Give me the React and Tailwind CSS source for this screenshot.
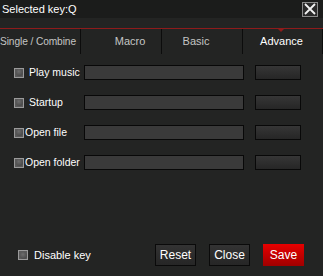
import React from "react";

const rows = [
  { label: "Play music", gap: "ml-[5px]" },
  { label: "Startup", gap: "ml-[5px]" },
  { label: "Open file", gap: "ml-[1px]" },
  { label: "Open folder", gap: "ml-[1px]" },
];

const Check = () => (
  <div className="w-[10px] h-[10px] shrink-0 border border-[#9a9a9a] bg-[#5a5a5a] flex items-center justify-center">
    <div className="w-[7px] h-[7px] rounded-full bg-[radial-gradient(circle_at_40%_35%,#6e6e6e,#3c3c3c)]" />
  </div>
);

const App = () => {
  return (
    <div
      className="w-[323px] h-[276px] bg-[#232423] text-[10.5px] text-white flex flex-col overflow-hidden"
      style={{ fontFamily: '"Liberation Sans", Arial, sans-serif' }}
    >
      {/* title bar */}
      <div className="h-[18px] bg-[#1b1c1b] flex items-center justify-between pl-[2px] pr-[5px] text-[11px]">
        <span>Selected key:Q</span>
        <div className="w-[16px] h-[15px] border border-[#8a8a8a] bg-[#2a2a2a] flex items-center justify-center">
          <svg width="12" height="12" viewBox="0 0 12 12">
            <path d="M1 1 L11 11 M11 1 L1 11" stroke="#f2f2f2" strokeWidth="1.8" />
          </svg>
        </div>
      </div>

      {/* tabs */}
      <div className="mt-[10px] h-px bg-[#8e1b1b]" />
      <div className="relative h-[25px] flex text-[#c4c4c4] text-[11px]">
        <div className="w-[81px] border-r border-[#0c0c0c] flex items-center justify-start whitespace-nowrap text-[10.2px] tracking-[-0.1px]">
          Single / Combine
        </div>
        <div className="w-[81px] border-r border-[#0c0c0c] flex items-center justify-center pl-[18px]">
          Macro
        </div>
        <div className="w-[81px] border-r border-[#0c0c0c] flex items-center justify-center pr-[12px]">
          Basic
        </div>
        <div className="w-[80px] border-r border-[#0c0c0c] flex items-center justify-center text-white pr-[2px]">
          Advance
        </div>
        <div className="absolute left-[278px] top-0 w-0 h-0 border-l-[3px] border-r-[3px] border-t-[3px] border-l-transparent border-r-transparent border-t-[#8e1b1b]" />
      </div>

      {/* rows */}
      <div className="mt-[11px] flex flex-col gap-[15px]">
        {rows.map((r) => (
          <div key={r.label} className="flex items-center h-[15px]">
            <div className="w-[84px] pl-[14px] flex items-center">
              <Check />
              <span className={`${r.gap} whitespace-nowrap`}>{r.label}</span>
            </div>
            <div className="w-[160px] h-[15px] bg-[#3a3a3a] border border-[#080808]" />
            <div className="ml-[11px] w-[46px] h-[15px] border border-[#080808] bg-gradient-to-b from-[#363636] to-[#262626]" />
          </div>
        ))}
      </div>

      {/* footer */}
      <div className="mt-auto mb-[10px] flex items-center">
        <div className="pl-[18px] flex items-center w-[155px]">
          <Check />
          <span className="ml-[6px] text-[11px]">Disable key</span>
        </div>
        <button className="w-[41px] h-[22px] border border-[#0a0a0a] bg-gradient-to-b from-[#333] to-[#262626] text-[12px]">
          Reset
        </button>
        <button className="ml-[13px] w-[41px] h-[22px] border border-[#0a0a0a] bg-gradient-to-b from-[#333] to-[#262626] text-[12px]">
          Close
        </button>
        <button className="ml-[13px] w-[41px] h-[22px] bg-gradient-to-b from-[#e80000] to-[#a00000] text-[12px]">
          Save
        </button>
      </div>
    </div>
  );
};

export default App;
